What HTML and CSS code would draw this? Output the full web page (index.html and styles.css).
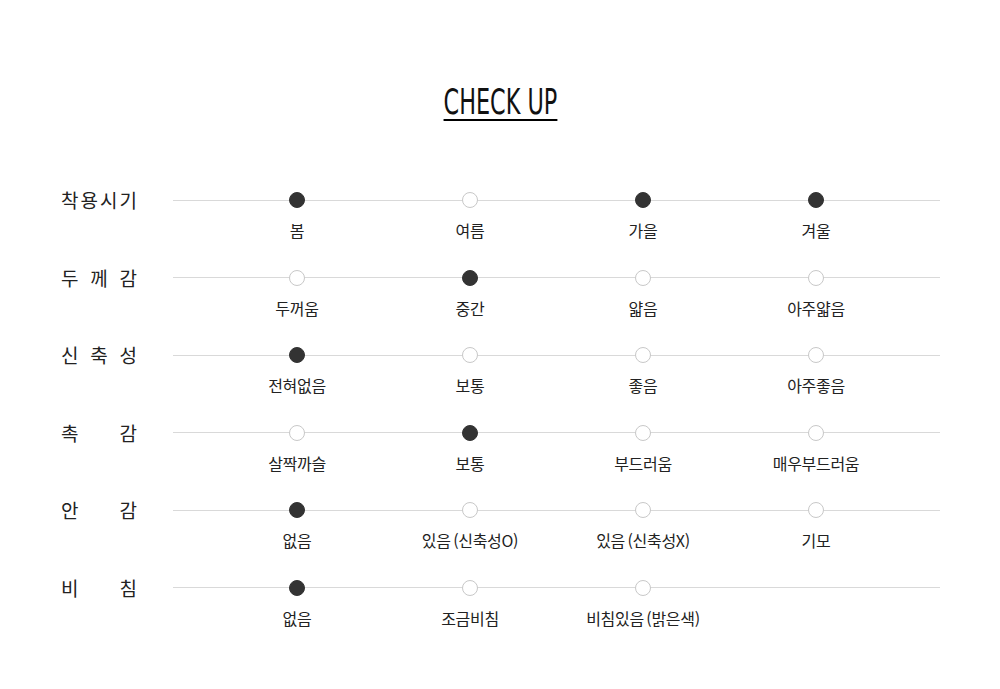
FILE: index.html
```html
<!DOCTYPE html>
<html lang="ko">
<head>
<meta charset="utf-8">
<title>CHECK UP</title>
<link rel="stylesheet" href="styles.css">
</head>
<body>
<div class="page">
  <div class="title-wrap"><h2 class="title"><span class="title-text">CHECK UP</span></h2></div>
  <div class="rows">
    <div class="row">
      <div class="label"><span>착</span><span>용</span><span>시</span><span>기</span></div>
      <div class="track">
        <div class="opt on"><i class="dot"></i><span class="txt">봄</span></div>
        <div class="opt"><i class="dot"></i><span class="txt">여름</span></div>
        <div class="opt on"><i class="dot"></i><span class="txt">가을</span></div>
        <div class="opt on"><i class="dot"></i><span class="txt">겨울</span></div>
      </div>
    </div>
    <div class="row">
      <div class="label"><span>두</span><span>께</span><span>감</span></div>
      <div class="track">
        <div class="opt"><i class="dot"></i><span class="txt">두꺼움</span></div>
        <div class="opt on"><i class="dot"></i><span class="txt">중간</span></div>
        <div class="opt"><i class="dot"></i><span class="txt">얇음</span></div>
        <div class="opt"><i class="dot"></i><span class="txt">아주얇음</span></div>
      </div>
    </div>
    <div class="row">
      <div class="label"><span>신</span><span>축</span><span>성</span></div>
      <div class="track">
        <div class="opt on"><i class="dot"></i><span class="txt">전혀없음</span></div>
        <div class="opt"><i class="dot"></i><span class="txt">보통</span></div>
        <div class="opt"><i class="dot"></i><span class="txt">좋음</span></div>
        <div class="opt"><i class="dot"></i><span class="txt">아주좋음</span></div>
      </div>
    </div>
    <div class="row">
      <div class="label"><span>촉</span><span>감</span></div>
      <div class="track">
        <div class="opt"><i class="dot"></i><span class="txt">살짝까슬</span></div>
        <div class="opt on"><i class="dot"></i><span class="txt">보통</span></div>
        <div class="opt"><i class="dot"></i><span class="txt">부드러움</span></div>
        <div class="opt"><i class="dot"></i><span class="txt">매우부드러움</span></div>
      </div>
    </div>
    <div class="row">
      <div class="label"><span>안</span><span>감</span></div>
      <div class="track">
        <div class="opt on"><i class="dot"></i><span class="txt">없음</span></div>
        <div class="opt"><i class="dot"></i><span class="txt">있음<span class="sp"> </span>(신축성O)</span></div>
        <div class="opt"><i class="dot"></i><span class="txt">있음<span class="sp"> </span>(신축성X)</span></div>
        <div class="opt"><i class="dot"></i><span class="txt">기모</span></div>
      </div>
    </div>
    <div class="row">
      <div class="label"><span>비</span><span>침</span></div>
      <div class="track">
        <div class="opt on"><i class="dot"></i><span class="txt">없음</span></div>
        <div class="opt"><i class="dot"></i><span class="txt">조금비침</span></div>
        <div class="opt"><i class="dot"></i><span class="txt">비침있음<span class="sp"> </span>(밝은색)</span></div>
      </div>
    </div>
  </div>
</div>
</body>
</html>
```

FILE: styles.css
```css
* { box-sizing: border-box; }
html, body { margin: 0; padding: 0; background: #fff; }
body {
  font-family: "Noto Sans CJK KR", "Noto Sans", sans-serif;
  color: #222;
}
.page {
  width: 1000px;
  padding: 85px 60px 0 61px;
}
.title-wrap {
  display: flex;
  justify-content: center;
  height: 107px;
}
.title {
  margin: 0;
  font-weight: normal;
}
.title-text {
  display: inline-block;
  font-family: "Liberation Sans Narrow", "DejaVu Sans Condensed", sans-serif;
  font-size: 36px;
  line-height: 34px;
  color: #111;
  transform: scaleX(0.69);
  transform-origin: center;
  border-bottom: 2px solid #000;
}
.rows {
  display: flex;
  flex-direction: column;
  gap: 27.6px;
}
.row {
  display: flex;
  align-items: flex-start;
  height: 50px;
}
.label {
  width: 76px;
  margin-right: 36px;
  display: flex;
  justify-content: space-between;
  font-size: 19px;
  line-height: 16px;
  height: 16px;
  color: #222;
}
.label span { display: block; line-height: 16px; }
.track {
  position: relative;
  width: 767px;
  padding: 0 37.5px;
  display: flex;
}
.track::before {
  content: "";
  position: absolute;
  left: 0;
  right: 0;
  top: 7.5px;
  height: 1px;
  background: #d9d9d9;
}
.opt {
  position: relative;
  width: 173px;
  display: flex;
  flex-direction: column;
  align-items: center;
}
.dot {
  display: block;
  width: 16px;
  height: 16px;
  border-radius: 50%;
  background: #fff;
  border: 1px solid #c8c8c8;
}
.opt.on .dot {
  background: #333;
  border-color: #333;
}
.txt {
  margin-top: 11px;
  font-size: 16px;
  line-height: 22px;
  color: #222;
  white-space: nowrap;
  letter-spacing: -0.3px;
}
.sp { letter-spacing: -2px; }
```
